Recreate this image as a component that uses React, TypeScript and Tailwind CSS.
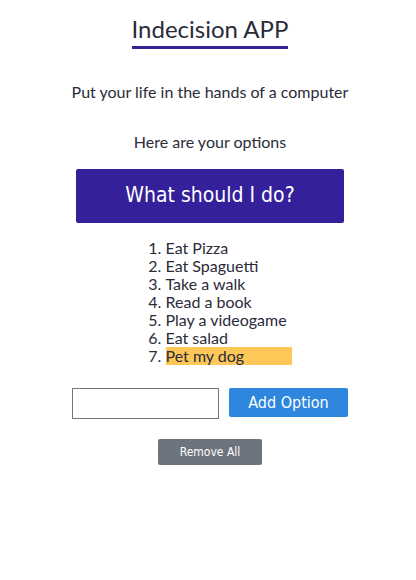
const options = [
  'Eat Pizza',
  'Eat Spaguetti',
  'Take a walk',
  'Read a book',
  'Play a videogame',
  'Eat salad',
  'Pet my dog',
];

function App() {
  const picked = options.length - 1;

  return (
    <div className="flex flex-col items-center bg-white pl-[4px] font-['Lato','Noto_Sans',sans-serif] text-[#2b2b3a]">
      <div className="mt-[14px] flex flex-col items-center">
        <h1 className="text-[24px] leading-[30px]">Indecision APP</h1>
        <div className="mt-[2px] h-[3px] w-[156px] bg-[#35229a]" />
      </div>

      <p className="mt-[33px] text-[16px] leading-5">
        Put your life in the hands of a computer
      </p>
      <p className="mt-[30px] text-[16px] leading-5">Here are your options</p>

      <button className="mt-[17px] h-[54px] w-[268px] rounded-[2px] bg-[#34209a] font-['DejaVu_Sans_Condensed','DejaVu_Sans',sans-serif] text-[21px] text-white">
        What should I do?
      </button>

      <ol className="mt-[16px] ml-[20px] w-[143px] list-decimal pl-[17px] text-[16px] leading-[18px]">
        {options.map((option, i) => (
          <li key={option}>
            <span className={i === picked ? 'block bg-[#fec859]' : 'block'}>
              {option}
            </span>
          </li>
        ))}
      </ol>

      <form className="mt-[23px] flex items-start gap-[10px]">
        <input
          type="text"
          className="h-[31px] w-[147px] border border-[#767676] px-1"
        />
        <button
          type="button"
          className="h-[29px] w-[119px] rounded-[2px] bg-[#2e86de] font-['DejaVu_Sans_Condensed','DejaVu_Sans',sans-serif] text-[16px] text-white"
        >
          Add Option
        </button>
      </form>

      <button className="mt-[20px] h-[26px] w-[104px] rounded-[2px] bg-[#6c757d] font-['DejaVu_Sans_Condensed','DejaVu_Sans',sans-serif] text-[12px] text-white">
        Remove All
      </button>
    </div>
  );
}

export default App;
